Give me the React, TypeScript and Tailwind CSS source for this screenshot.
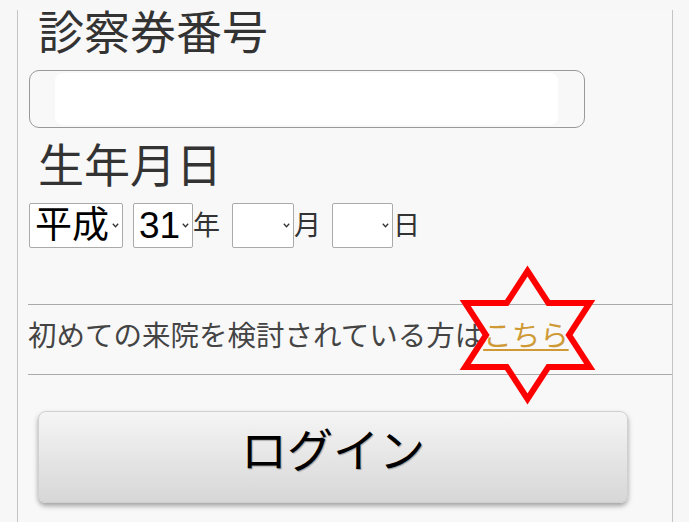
import React from "react";

// small chevron drawn like the native select arrow
function Chevron() {
  return (
    <svg width="7" height="5" viewBox="0 0 7 5" className="shrink-0">
      <path d="M0.8 0.8 L3.5 3.8 L6.2 0.8" fill="none" stroke="#333" strokeWidth="1.3" />
    </svg>
  );
}

function FakeSelect({ value, width }: { value?: string; width: string }) {
  return (
    <div
      className={`flex h-[45px] items-center justify-between rounded-[2px] border border-[#aaa] bg-white pl-[5px] pr-[3px] ${width}`}
    >
      <span className="text-[37px] leading-none text-black">{value ?? ""}</span>
      <Chevron />
    </div>
  );
}

// hexagram outline drawn over the link
function Star() {
  return (
    <svg
      className="pointer-events-none absolute left-0 top-0"
      width="689"
      height="522"
      viewBox="0 0 689 522"
    >
      <polygon
        points="527.5,271 548.3,303 589.8,303 569,335 589.8,367 548.3,367 527.5,399 506.7,367 465.2,367 486,335 465.2,303 506.7,303"
        fill="none"
        stroke="#f00"
        strokeWidth="6"
        strokeLinejoin="miter"
      />
    </svg>
  );
}

export default function App() {
  return (
    <div className="relative h-[522px] w-full overflow-hidden bg-[#f7f7f7] font-['Liberation_Sans','Noto_Sans_CJK_JP',sans-serif]">
      <div className="ml-[17px] h-full w-[656px] border-x border-[#c4c4c4] bg-[#f8f8f8] pl-[11px]">
        <h1 className="ml-[9px] mt-[10px] text-[46px] font-normal leading-none text-[#333]">診察券番号</h1>

        {/* patient card number */}
        <div className="mt-[14px] h-[58px] w-[556px] rounded-[10px] border border-[#999] py-[2px] pl-[25px] pr-[26px]">
          <div className="h-full rounded-[8px] bg-white" />
        </div>

        <h2 className="ml-[9px] mt-[15px] text-[46px] font-normal leading-none text-[#333]">生年月日</h2>

        {/* birthday selects */}
        <div className="mt-[14px] flex h-[45px] items-end text-[#333]">
          <FakeSelect value="平成" width="w-[94px]" />
          <div className="ml-[10px]">
            <FakeSelect value="31" width="w-[60px]" />
          </div>
          <span className="mb-[8px] text-[27px] leading-none">年</span>
          <div className="ml-[12px]">
            <FakeSelect width="w-[62px]" />
          </div>
          <span className="mb-[8px] text-[27px] leading-none">月</span>
          <div className="ml-[11px]">
            <FakeSelect width="w-[61px]" />
          </div>
          <span className="mb-[8px] text-[27px] leading-none">日</span>
        </div>

        <div className="mt-[56px] -ml-px border-y border-[#aaa] pb-[23px] pt-[17px]">
          <p className="text-[28.5px] leading-none text-[#444]">
            初めての来院を検討されている方は
            <a href="#" className="text-[#cf9a35] underline decoration-[2px] underline-offset-[3px]">
              こちら
            </a>
          </p>
        </div>

        <button className="ml-[9px] mt-[36px] flex h-[92px] w-[590px] items-center justify-center rounded-[8px] border border-[#d0d0d0] bg-gradient-to-b from-[#f5f5f5] to-[#d7d7d7] pb-[12px] shadow-[0_3px_5px_rgba(0,0,0,0.35)]">
          <span className="text-[46px] leading-none text-black [text-shadow:1px_1px_1px_rgba(0,0,0,0.3)]">ログイン</span>
        </button>
      </div>
      <Star />
    </div>
  );
}
